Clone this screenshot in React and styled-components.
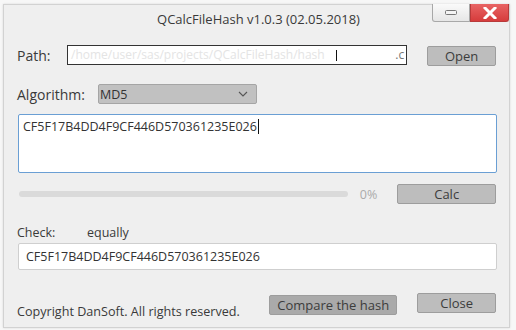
import React from "react";
import styled, { createGlobalStyle } from "styled-components";

const Global = createGlobalStyle`
  html, body { margin: 0; padding: 0; background: #f7f7f7; }
  body { font-family: "Open Sans", "Noto Sans", sans-serif; }
  #root { width: 516px; height: 330px; }
`;

const Page = styled.div`
  width: 516px;
  height: 330px;
  box-sizing: border-box;
  padding: 4px 6px 2px 3px;
`;

const Window = styled.div`
  width: 507px;
  height: 324px;
  box-sizing: border-box;
  background: #efefef;
  border: 1px solid #d2d2d2;
  box-shadow: 0 0 2px rgba(0,0,0,0.12);
  display: flex;
  flex-direction: column;
  color: #333;
  font-size: 12.5px;
`;

const TitleBar = styled.div`
  height: 29px;
  display: grid;
  grid-template-columns: 1fr auto 1fr;
  align-items: start;
`;

const Title = styled.div`
  grid-column: 2;
  font-size: 13px;
  line-height: 28px;
  color: #3a3a3a;
  padding-left: 4px;
`;

const Controls = styled.div`
  grid-column: 3;
  justify-self: end;
  display: flex;
  margin-top: -1px;
`;

const CtrlBtn = styled.div`
  width: ${p => p.$w}px;
  height: 18px;
  box-sizing: border-box;
  display: flex;
  align-items: center;
  justify-content: center;
  border: 1px solid ${p => (p.$close ? "#b83a3a" : "#a8a8a8")};
  border-top: none;
  background: ${p => (p.$close ? "linear-gradient(#e86464, #d63c3c)" : "linear-gradient(#fafafa, #e6e6e6)")};
  border-radius: ${p => (p.$close ? "0 0 3px 0" : "0 0 0 3px")};
`;

const Body = styled.div`
  display: flex;
  flex-direction: column;
  padding: 0 13px 0 13px;
`;

const Row = styled.div`
  display: flex;
  align-items: center;
  margin-top: ${p => p.$mt || 0}px;
`;

const Label = styled.span`
  font-size: ${p => p.$fs || 14}px;
  color: #3a3a3a;
  width: ${p => p.$w}px;
  flex-shrink: 0;
`;

const PathField = styled.div`
  width: 341px;
  height: 20px;
  box-sizing: border-box;
  border: 1px solid #333;
  background: #fff;
  position: relative;
  overflow: hidden;
  font-size: 12px;
  line-height: 18px;
  padding-left: 3px;
  color: #e4e4e4;
  white-space: nowrap;
`;

const Caret = styled.span`
  position: absolute;
  left: ${p => p.$x}px;
  top: ${p => p.$y}px;
  width: 1px;
  height: ${p => p.$h}px;
  background: #111;
`;

const PathTail = styled.span`
  position: absolute;
  right: 2px;
  top: 0;
  color: #777;
  font-size: 12px;
  line-height: 18px;
`;

const Button = styled.div`
  width: ${p => p.$w}px;
  height: 20px;
  box-sizing: border-box;
  border: 1px solid #9d9d9d;
  border-radius: 2px;
  background: ${p => (p.$dark ? "#aaaaaa" : "#bdbdbd")};
  display: flex;
  align-items: center;
  justify-content: center;
  font-size: 13px;
  color: #3c3c3c;
  margin-left: ${p => p.$ml || 0}px;
  margin-top: ${p => p.$mt || 0}px;
`;

const Combo = styled.div`
  width: 159px;
  height: 20px;
  box-sizing: border-box;
  border: 1px solid #a5a5a5;
  border-radius: 2px;
  background: #c1c1c1;
  display: flex;
  align-items: center;
  justify-content: space-between;
  padding: 0 8px 0 1px;
  font-size: 12.5px;
  color: #333;
`;

const TextArea = styled.div`
  margin-top: 10px;
  margin-left: 1px;
  width: 479px;
  height: 59px;
  box-sizing: border-box;
  border: 1px solid #6a9fd4;
  border-radius: 2px;
  background: #fff;
  padding: 3px 4px;
  font-size: 12.5px;
  line-height: 18px;
  color: #333;
`;

const InlineCaret = styled.span`
  display: inline-block;
  width: 1px;
  height: 15px;
  background: #111;
  vertical-align: -3px;
  margin-left: 1px;
`;

const Progress = styled.div`
  width: 330px;
  height: 6px;
  border-radius: 3px;
  background: #dadada;
  margin-left: 2px;
`;

const Percent = styled.span`
  color: #ababab;
  font-size: 12.5px;
  margin-left: 12px;
`;

const CheckRow = styled.div`
  display: flex;
  align-items: baseline;
  margin-top: 20px;
  font-size: 12.5px;
  color: #3a3a3a;
`;

const CheckField = styled.div`
  margin-top: 2px;
  margin-left: 1px;
  width: 479px;
  height: 27px;
  box-sizing: border-box;
  border: 1px solid #cfcfcf;
  border-radius: 2px;
  background: #fff;
  padding: 0 7px;
  display: flex;
  align-items: center;
  font-size: 12.5px;
  color: #333;
`;

const Footer = styled.div`
  display: flex;
  align-items: flex-start;
  margin-top: 23px;
`;

const Copyright = styled.span`
  font-size: 12.6px;
  color: #3a3a3a;
  margin-top: 10px;
  width: 252px;
  flex-shrink: 0;
`;

export default function App() {
  return (
    <>
      <Global />
      <Page>
        <Window>
          <TitleBar>
            <Title>QCalcFileHash v1.0.3 (02.05.2018)</Title>
            <Controls>
              <CtrlBtn $w={38}>
                <svg width="12" height="6" viewBox="0 0 12 6">
                  <rect x="0.5" y="0.5" width="11" height="4" rx="1" fill="#f4f4f4" stroke="#777" />
                </svg>
              </CtrlBtn>
              <CtrlBtn $w={39} $close>
                <svg width="14" height="12" viewBox="0 0 14 12">
                  <path d="M2 1 L12 11 M12 1 L2 11" stroke="#fff" strokeWidth="3" strokeLinecap="square" />
                </svg>
              </CtrlBtn>
            </Controls>
          </TitleBar>
          <Body>
            <Row $mt={10}>
              <Label $w={50}>Path:</Label>
              <PathField>
                /home/user/sas/projects/QCalcFileHash/hash
                <Caret $x={268} $y={4} $h={11} />
                <PathTail>.c</PathTail>
              </PathField>
              <Button $w={69} $ml={20} $mt={2}>Open</Button>
            </Row>
            <Row $mt={18}>
              <Label $w={81}>Algorithm:</Label>
              <Combo>
                <span>MD5</span>
                <svg width="10" height="6" viewBox="0 0 10 6">
                  <path d="M1 1 L5 5 L9 1" fill="none" stroke="#555" strokeWidth="1.1" />
                </svg>
              </Combo>
            </Row>
            <TextArea>
              CF5F17B4DD4F9CF446D570361235E026<InlineCaret />
            </TextArea>
            <Row $mt={11}>
              <Progress />
              <Percent>0%</Percent>
              <Button $w={99} $ml={20}>Calc</Button>
            </Row>
            <CheckRow>
              <Label $w={70} $fs={12.5}>Check:</Label>
              <span>equally</span>
            </CheckRow>
            <CheckField>CF5F17B4DD4F9CF446D570361235E026</CheckField>
            <Footer>
              <Copyright>Copyright DanSoft. All rights reserved.</Copyright>
              <Button $w={129} $dark $mt={2}>Compare the hash</Button>
              <Button $w={79} $ml={20}>Close</Button>
            </Footer>
          </Body>
        </Window>
      </Page>
    </>
  );
}
